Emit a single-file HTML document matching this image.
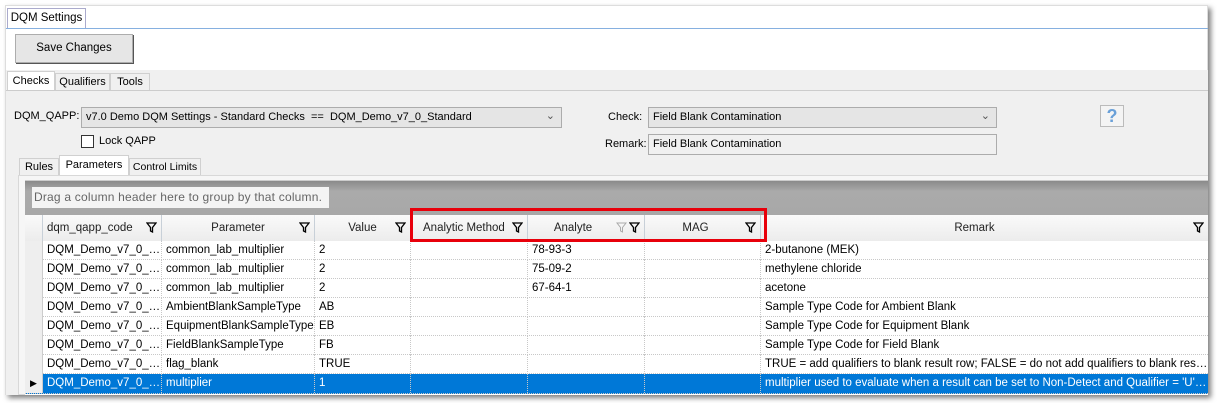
<!DOCTYPE html>
<html><head><meta charset="utf-8"><style>
*{box-sizing:border-box;margin:0;padding:0}
body{width:1217px;height:403px;background:#fff;font-family:"Liberation Sans","DejaVu Sans",sans-serif;font-size:11.5px;color:#000;position:relative;overflow:hidden}
.a{position:absolute;white-space:nowrap}
.win{left:5px;top:5px;width:1203px;height:390px;background:#fff;box-shadow:3px 3px 5px rgba(0,0,0,.5);border:1px solid #ddd}
.gray{background:#f0f0f0}
.tab{position:absolute;border:1px solid #d0d0d0;border-bottom:none;background:#f0f0f0;font-size:11px;text-align:center;white-space:nowrap}
.sel{background:#fff}
.combo{background:#e5e5e5;border:1px solid #acacac;font-size:11px;padding:3px 4px;white-space:nowrap}
.hd{position:absolute;top:215px;height:26px;border-right:1px solid #c8d0d8;background:linear-gradient(#fafafa,#ececec);font-size:11.5px;color:#222;line-height:26px;text-align:center;white-space:nowrap}
.flt{position:absolute;right:4px;top:7px;width:11px;height:11px}
.row{position:absolute;left:25px;width:1183px;height:19px;border-bottom:1px dotted #c8c8c8;font-size:11.5px;line-height:18px;white-space:nowrap}
.c{position:absolute;top:0;height:19px;border-right:1px dotted #c8c8c8;padding-left:4px;overflow:hidden;text-overflow:ellipsis}
.ind{position:absolute;left:0;top:0;width:18px;height:19px;background:#eee;border-right:1px solid #ccc}
.s{background:#0078d7;color:#fff}
</style></head><body>
<div class="a win"></div>
<div class="tab sel" style="left:7px;top:8px;width:79px;height:21px;line-height:19px;background:#fff;border-color:#aac;font-size:11.5px">DQM Settings</div>
<div class="a" style="left:6px;top:28px;width:1202px;height:1px;background:#86b0e0"></div>
<div class="a" style="left:15px;top:34px;width:118px;height:29px;background:#e6e6e6;border:1px solid #adadad;box-shadow:1px 1px 0 #555;text-align:center;line-height:27px">Save Changes</div>
<div class="a gray" style="left:6px;top:70px;width:1202px;height:325px"></div>
<div class="tab sel" style="left:7px;top:71px;width:48px;height:20px;line-height:18px;background:#fff">Checks</div>
<div class="tab" style="left:55px;top:73px;width:55px;height:18px;line-height:17px">Qualifiers</div>
<div class="tab" style="left:110px;top:73px;width:40px;height:18px;line-height:17px">Tools</div>
<div class="a" style="left:6px;top:90px;width:1202px;height:1px;background:#ccc"></div>
<div class="a" style="left:14px;top:110px;font-size:11px">DQM_QAPP:</div>
<div class="a combo" style="left:81px;top:107px;width:481px;height:21px">v7.0 Demo DQM Settings - Standard Checks &nbsp;== &nbsp;DQM_Demo_v7_0_Standard<span style="position:absolute;right:6px;top:1px;color:#555">&#8964;</span></div>
<div class="a" style="left:81px;top:135px;width:13px;height:13px;background:#fff;border:1px solid #333"></div>
<div class="a" style="left:99px;top:135px;font-size:11px">Lock QAPP</div>
<div class="a" style="left:608px;top:111px;font-size:11px">Check:</div>
<div class="a combo" style="left:648px;top:107px;width:349px;height:21px">Field Blank Contamination<span style="position:absolute;right:6px;top:1px;color:#555">&#8964;</span></div>
<div class="a" style="left:605px;top:138px;font-size:11px">Remark:</div>
<div class="a combo" style="left:648px;top:134px;width:349px;height:21px;background:#f0f0f0">Field Blank Contamination</div>
<div class="a" style="left:1100px;top:105px;width:24px;height:22px;border:1px solid #bbb;background:#f4f4f4;color:#6aa0d8;font-weight:bold;font-size:18px;text-align:center;line-height:20px">?</div>
<div class="tab" style="left:19px;top:158px;width:40px;height:18px;line-height:16px">Rules</div>
<div class="tab sel" style="left:59px;top:155px;width:70px;height:21px;line-height:18px;background:#fff">Parameters</div>
<div class="tab" style="left:129px;top:158px;width:72px;height:18px;line-height:16px;font-size:10.5px">Control Limits</div>
<div class="a" style="left:18px;top:175px;width:1190px;height:220px;border:1px solid #d8d8d8;border-right:none;background:#f6f6f6"></div>
<div class="a" style="left:25px;top:180px;width:1183px;height:35px;background:linear-gradient(#8a8a8a,#aaa 30%,#a8a8a8);border-top:1px solid #ccc"></div>
<div class="a" style="left:32px;top:187px;width:297px;height:21px;background:#f4f4f4;color:#666;line-height:21px;padding-left:2px;font-size:12px;letter-spacing:0.2px">Drag a column header here to group by that column.</div>
<div class="hd" style="left:25px;width:18px"></div>
<div class="hd" style="left:43px;width:119px;text-align:left;padding-left:4px">dqm_qapp_code<svg class="flt" viewBox="0 0 11 11"><path d="M1 1h9L6.5 5.5V10L4.5 9V5.5Z" fill="none" stroke="#000" stroke-width="1.3"/></svg></div>
<div class="hd" style="left:162px;width:153px">Parameter<svg class="flt" viewBox="0 0 11 11"><path d="M1 1h9L6.5 5.5V10L4.5 9V5.5Z" fill="none" stroke="#000" stroke-width="1.3"/></svg></div>
<div class="hd" style="left:315px;width:96px">Value<svg class="flt" viewBox="0 0 11 11"><path d="M1 1h9L6.5 5.5V10L4.5 9V5.5Z" fill="none" stroke="#000" stroke-width="1.3"/></svg></div>
<div class="hd" style="left:411px;width:117px;text-align:left;padding-left:12px">Analytic Method<svg class="flt" viewBox="0 0 11 11"><path d="M1 1h9L6.5 5.5V10L4.5 9V5.5Z" fill="none" stroke="#000" stroke-width="1.3"/></svg></div>
<div class="hd" style="left:528px;width:117px;padding-right:26px">Analyte<svg class="flt" style="right:17px" viewBox="0 0 11 11"><path d="M1 1h9L6.5 5.5V10L4.5 9V5.5Z" fill="none" stroke="#aaa" stroke-width="1"/></svg><svg class="flt" viewBox="0 0 11 11"><path d="M1 1h9L6.5 5.5V10L4.5 9V5.5Z" fill="none" stroke="#000" stroke-width="1.3"/></svg></div>
<div class="hd" style="left:645px;width:116px;padding-right:14px">MAG<svg class="flt" viewBox="0 0 11 11"><path d="M1 1h9L6.5 5.5V10L4.5 9V5.5Z" fill="none" stroke="#000" stroke-width="1.3"/></svg></div>
<div class="hd" style="left:761px;width:447px;border-right:none;padding-right:20px">Remark<svg class="flt" viewBox="0 0 11 11"><path d="M1 1h9L6.5 5.5V10L4.5 9V5.5Z" fill="none" stroke="#000" stroke-width="1.3"/></svg></div>
<div class="a" style="left:25px;top:241px;width:1183px;height:154px;background:#fff"></div>

<div class="row" style="top:241px"><div class="ind"></div><div class="c" style="left:18px;width:119px">DQM_Demo_v7_0_Standard</div><div class="c" style="left:137px;width:153px">common_lab_multiplier</div><div class="c" style="left:290px;width:96px">2</div><div class="c" style="left:386px;width:117px"></div><div class="c" style="left:503px;width:117px">78-93-3</div><div class="c" style="left:620px;width:116px"></div><div class="c" style="left:736px;width:447px;border:none">2-butanone (MEK)</div></div>
<div class="row" style="top:260px"><div class="ind"></div><div class="c" style="left:18px;width:119px">DQM_Demo_v7_0_Standard</div><div class="c" style="left:137px;width:153px">common_lab_multiplier</div><div class="c" style="left:290px;width:96px">2</div><div class="c" style="left:386px;width:117px"></div><div class="c" style="left:503px;width:117px">75-09-2</div><div class="c" style="left:620px;width:116px"></div><div class="c" style="left:736px;width:447px;border:none">methylene chloride</div></div>
<div class="row" style="top:279px"><div class="ind"></div><div class="c" style="left:18px;width:119px">DQM_Demo_v7_0_Standard</div><div class="c" style="left:137px;width:153px">common_lab_multiplier</div><div class="c" style="left:290px;width:96px">2</div><div class="c" style="left:386px;width:117px"></div><div class="c" style="left:503px;width:117px">67-64-1</div><div class="c" style="left:620px;width:116px"></div><div class="c" style="left:736px;width:447px;border:none">acetone</div></div>
<div class="row" style="top:298px"><div class="ind"></div><div class="c" style="left:18px;width:119px">DQM_Demo_v7_0_Standard</div><div class="c" style="left:137px;width:153px">AmbientBlankSampleType</div><div class="c" style="left:290px;width:96px">AB</div><div class="c" style="left:386px;width:117px"></div><div class="c" style="left:503px;width:117px"></div><div class="c" style="left:620px;width:116px"></div><div class="c" style="left:736px;width:447px;border:none">Sample Type Code for Ambient Blank</div></div>
<div class="row" style="top:317px"><div class="ind"></div><div class="c" style="left:18px;width:119px">DQM_Demo_v7_0_Standard</div><div class="c" style="left:137px;width:153px">EquipmentBlankSampleType</div><div class="c" style="left:290px;width:96px">EB</div><div class="c" style="left:386px;width:117px"></div><div class="c" style="left:503px;width:117px"></div><div class="c" style="left:620px;width:116px"></div><div class="c" style="left:736px;width:447px;border:none">Sample Type Code for Equipment Blank</div></div>
<div class="row" style="top:336px"><div class="ind"></div><div class="c" style="left:18px;width:119px">DQM_Demo_v7_0_Standard</div><div class="c" style="left:137px;width:153px">FieldBlankSampleType</div><div class="c" style="left:290px;width:96px">FB</div><div class="c" style="left:386px;width:117px"></div><div class="c" style="left:503px;width:117px"></div><div class="c" style="left:620px;width:116px"></div><div class="c" style="left:736px;width:447px;border:none">Sample Type Code for Field Blank</div></div>
<div class="row" style="top:355px"><div class="ind"></div><div class="c" style="left:18px;width:119px">DQM_Demo_v7_0_Standard</div><div class="c" style="left:137px;width:153px">flag_blank</div><div class="c" style="left:290px;width:96px">TRUE</div><div class="c" style="left:386px;width:117px"></div><div class="c" style="left:503px;width:117px"></div><div class="c" style="left:620px;width:116px"></div><div class="c" style="left:736px;width:447px;border:none">TRUE = add qualifiers to blank result row; FALSE = do not add qualifiers to blank result row</div></div>
<div class="row s" style="top:374px;height:20px"><div class="ind" style="color:#000;font-size:9px;line-height:19px;text-align:center">&#9654;</div><div class="c s" style="left:18px;width:119px">DQM_Demo_v7_0_Standard</div><div class="c s" style="left:137px;width:153px">multiplier</div><div class="c s" style="left:290px;width:96px">1</div><div class="c s" style="left:386px;width:117px"></div><div class="c s" style="left:503px;width:117px"></div><div class="c s" style="left:620px;width:116px"></div><div class="c s" style="left:736px;width:447px;border:none">multiplier used to evaluate when a result can be set to Non-Detect and Qualifier = 'U' value</div></div>

<div class="a" style="left:410px;top:208px;width:357px;height:34px;border:3px solid #e8000b"></div>
</body></html>
